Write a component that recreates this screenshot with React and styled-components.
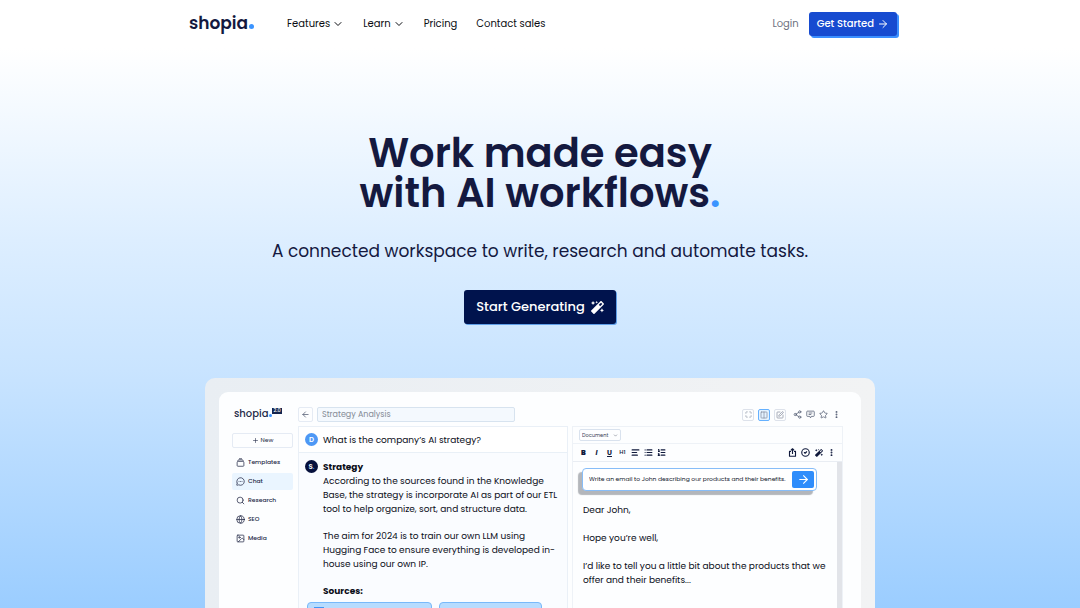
import React from "react";
import styled, { createGlobalStyle } from "styled-components";
import {
  ArrowLeft,
  ArrowRight,
  ChevronDown,
  CircleCheck,
  Columns2,
  EllipsisVertical,
  FileText,
  Globe,
  Image,
  List,
  ListOrdered,
  Maximize,
  MessageCircleMore,
  Plus,
  Search,
  Share2,
  SquarePen,
  Star,
  TextAlignStart,
} from "lucide-react";
import { FaMagic } from "react-icons/fa";

const navLinks = [
  { label: "Features", menu: true },
  { label: "Learn", menu: true },
  { label: "Pricing" },
  { label: "Contact sales" },
];

const LineIcon = ({ d, strokeWidth = 2 }) => (
  <svg
    width="9"
    height="9"
    viewBox="0 0 24 24"
    fill="none"
    stroke="currentColor"
    strokeWidth={strokeWidth}
    strokeLinejoin="round"
  >
    <path d={d} />
  </svg>
);

const TemplatesIcon = () => (
  <LineIcon d="M8 2h8M5 9V7a2 2 0 0 1 2-2h10a2 2 0 0 1 2 2v2M3 12a3 3 0 0 1 3-3h12a3 3 0 0 1 3 3v8a2 2 0 0 1-2 2H5a2 2 0 0 1-2-2z" />
);
const CommentIcon = () => (
  <LineIcon d="M4 3h16a2 2 0 0 1 2 2v10a2 2 0 0 1-2 2h-6l-2 4-2-4H4a2 2 0 0 1-2-2V5a2 2 0 0 1 2-2zM7 8h10M7 12h7" />
);
const ExportIcon = () => (
  <LineIcon strokeWidth={3} d="M8 9H4v13h16V9h-4M12 16V3M8 6l4-4 4 4" />
);

const sideLinks = [
  { label: "Templates", icon: TemplatesIcon },
  { label: "Chat", icon: MessageCircleMore, active: true },
  { label: "Research", icon: Search },
  { label: "SEO", icon: Globe },
  { label: "Media", icon: Image },
];

const App = () => {
  return (
    <>
      <GlobalStyle />
      <Page>
        <Header>
          <Logo href="#">
            shopia
            <Dot $size={5} />
          </Logo>
          <Nav>
            {navLinks.map(({ label, menu }) => (
              <a href="#" key={label}>
                {label}
                {menu && <ChevronDown size={12} />}
              </a>
            ))}
          </Nav>
          <Login href="#">Login</Login>
          <GetStarted>
            Get Started <ArrowRight size={12} />
          </GetStarted>
        </Header>
        <Hero>
          <h1>
            Work made easy
            <br />
            with AI workflows<i>.</i>
          </h1>
          <p>A connected workspace to write, research and automate tasks.</p>
          <Generate>
            Start Generating <FaMagic size={13} />
          </Generate>
        </Hero>
        <Frame>
          <Workspace>
            <Sidebar>
              <AppLogo>
                shopia
                <Dot $size={3} />
                <sup>2.0</sup>
              </AppLogo>
              <NewButton>
                <Plus size={7} /> New
              </NewButton>
              <SideNav>
                {sideLinks.map(({ label, icon: Icon, active }) => (
                  <SideLink href="#" key={label} $active={active}>
                    <Icon size={9} />
                    {label}
                  </SideLink>
                ))}
              </SideNav>
            </Sidebar>
            <Main>
              <TopBar>
                <BackButton aria-label="Back">
                  <ArrowLeft size={9} />
                </BackButton>
                <TitleInput aria-label="Title" defaultValue="Strategy Analysis" />
                <Views>
                  <ViewButton aria-label="Full screen">
                    <Maximize size={7} />
                  </ViewButton>
                  <ViewButton aria-label="Split view" $active>
                    <Columns2 size={8} />
                  </ViewButton>
                  <ViewButton aria-label="Edit">
                    <SquarePen size={8} />
                  </ViewButton>
                </Views>
                <Actions>
                  <IconButton aria-label="Share">
                    <Share2 size={9} />
                  </IconButton>
                  <IconButton aria-label="Comments">
                    <CommentIcon />
                  </IconButton>
                  <IconButton aria-label="Favourite">
                    <Star size={9} />
                  </IconButton>
                  <IconButton aria-label="More">
                    <EllipsisVertical size={9} strokeWidth={3} />
                  </IconButton>
                </Actions>
              </TopBar>
              <Panels>
                <Chat>
                  <Question>
                    <Avatar>D</Avatar>
                    What is the company’s AI strategy?
                  </Question>
                  <Answer>
                    <Avatar $dark>
                      S<i>.</i>
                    </Avatar>
                    <div>
                      <h2>Strategy</h2>
                      <p>
                        According to the sources found in the Knowledge
                        <br />
                        Base, the strategy is incorporate AI as part of our ETL
                        <br />
                        tool to help organize, sort, and structure data.
                      </p>
                      <p>
                        The aim for 2024 is to train our own LLM using
                        <br />
                        Hugging Face to ensure everything is developed in-
                        <br />
                        house using our own IP.
                      </p>
                      <h2>Sources:</h2>
                    </div>
                  </Answer>
                  <Sources>
                    <Source aria-label="Web source">
                      <b />
                    </Source>
                    <Source aria-label="File source" $small>
                      <FileText size={9} />
                    </Source>
                  </Sources>
                </Chat>
                <Editor>
                  <DocumentBar>
                    <SelectBox>
                      <select aria-label="Type">
                        <option>Document</option>
                      </select>
                      <ChevronDown size={5} />
                    </SelectBox>
                  </DocumentBar>
                  <Toolbar>
                    <button aria-label="Bold">
                      <b>B</b>
                    </button>
                    <button aria-label="Italic">
                      <em>I</em>
                    </button>
                    <button aria-label="Underline">
                      <u>U</u>
                    </button>
                    <button aria-label="Heading">
                      <small>H1</small>
                    </button>
                    <button aria-label="Align">
                      <TextAlignStart size={9} strokeWidth={3} />
                    </button>
                    <button aria-label="Bullets">
                      <List size={9} strokeWidth={3} />
                    </button>
                    <button aria-label="Numbers">
                      <ListOrdered size={9} strokeWidth={3} />
                    </button>
                    <Spacer />
                    <button aria-label="Export">
                      <ExportIcon />
                    </button>
                    <button aria-label="Check">
                      <CircleCheck size={9} strokeWidth={3} />
                    </button>
                    <button aria-label="Generate">
                      <FaMagic size={8} />
                    </button>
                    <button aria-label="More">
                      <EllipsisVertical size={9} strokeWidth={3} />
                    </button>
                  </Toolbar>
                  <Sheet>
                    <Prompt>
                      <input
                        aria-label="Prompt"
                        defaultValue="Write an email to John describing our products and their benefits."
                      />
                      <button aria-label="Send">
                        <ArrowRight size={13} strokeWidth={2} />
                      </button>
                    </Prompt>
                    <Letter>
                      <p>Dear John,</p>
                      <p>Hope you’re well,</p>
                      <p>
                        I’d like to tell you a little bit about the products that we
                        <br />
                        offer and their benefits...
                      </p>
                    </Letter>
                  </Sheet>
                </Editor>
              </Panels>
            </Main>
          </Workspace>
        </Frame>
      </Page>
    </>
  );
};

const GlobalStyle = createGlobalStyle`
  * {
    box-sizing: border-box;
  }
  body {
    margin: 0;
    color: #14193f;
    font-family: Poppins, Inter, sans-serif;
  }
  h1, h2, p {
    margin: 0;
  }
  i {
    color: #3b94ff;
    font-style: normal;
  }
  a {
    color: inherit;
    text-decoration: none;
  }
  button, input, select {
    margin: 0;
    padding: 0;
    border: 0;
    background: none;
    color: inherit;
    font: inherit;
  }
  svg {
    flex-shrink: 0;
  }
`;

const Page = styled.div`
  height: 100vh;
  overflow: hidden;
  background: linear-gradient(#fff 48px, #ddeeff 240px, #c9e4ff 370px, #9bcdff 100%);
`;

const Header = styled.header`
  display: flex;
  align-items: center;
  max-width: 714px;
  height: 48px;
  margin: 0 auto;
  padding-left: 6px;
`;

const Dot = styled.span`
  display: inline-block;
  width: ${({ $size }) => $size}px;
  height: ${({ $size }) => $size}px;
  margin-left: 1px;
  border-radius: 50%;
  background: #3b94ff;
`;

const Logo = styled.a`
  width: 98px;
  padding-bottom: 3px;
  font-size: 17px;
  font-weight: 600;
`;

const Nav = styled.nav`
  display: flex;
  flex: 1;
  gap: 19px;
  color: #0b0d12;
  font-size: 10px;
  a {
    display: flex;
    align-items: center;
    gap: 2px;
  }
`;

const Login = styled.a`
  margin-right: 10px;
  color: #6d7180;
  font-size: 10px;
`;

const GetStarted = styled.button`
  display: flex;
  align-items: center;
  gap: 3px;
  height: 24px;
  padding: 0 8px;
  border-radius: 3px;
  background: #174bd0;
  box-shadow: 2px 2px 0 #3b8fff;
  color: #fff;
  font-size: 10px;
  font-weight: 500;
`;

const Hero = styled.section`
  padding-top: 85px;
  text-align: center;
  h1 {
    font-size: 40px;
    font-weight: 600;
    line-height: 40px;
  }
  p {
    margin-top: 25px;
    font-size: 17px;
    line-height: 26px;
  }
`;

const Generate = styled.button`
  display: inline-flex;
  align-items: center;
  gap: 6px;
  height: 34px;
  margin-top: 26px;
  padding: 0 12px;
  border-radius: 3px;
  background: #00134d;
  box-shadow: 1px 1px 0 #5f9fe8;
  color: #fff;
  font-size: 13px;
  font-weight: 500;
`;

const Frame = styled.section`
  max-width: 670px;
  margin: 54px auto 0;
  padding: 14px 14px 0;
  border-radius: 10px 10px 0 0;
  background: linear-gradient(90deg, #e9eef3, #f2f3f4);
`;

const Workspace = styled.div`
  display: flex;
  min-height: 260px;
  padding: 14px 18px 0 13px;
  border-radius: 9px 9px 0 0;
  background: #fdfeff;
`;

const Sidebar = styled.aside`
  width: 61px;
  margin-right: 5px;
  color: #252b48;
`;

const AppLogo = styled.div`
  display: flex;
  align-items: baseline;
  height: 27px;
  padding-left: 2px;
  font-size: 10px;
  font-weight: 500;
  line-height: 15px;
  sup {
    align-self: flex-start;
    height: 6px;
    margin-top: 2px;
    padding: 0 1px;
    background: #14254f;
    color: #fff;
    font-size: 5px;
    line-height: 6px;
  }
`;

const NewButton = styled.button`
  display: flex;
  align-items: center;
  justify-content: center;
  gap: 2px;
  width: 100%;
  height: 15px;
  border: 1px solid #e5ebf4;
  border-radius: 2px;
  font-size: 6px;
`;

const SideNav = styled.nav`
  display: grid;
  gap: 2px;
  margin-top: 6px;
`;

const SideLink = styled.a`
  display: flex;
  align-items: center;
  gap: 3px;
  height: 17px;
  padding-left: 4px;
  border-radius: 2px;
  background: ${({ $active }) => ($active ? "#eaf5ff" : "transparent")};
  font-size: 6px;
  font-weight: 500;
`;

const Main = styled.div`
  flex: 1;
  min-width: 0;
`;

const TopBar = styled.div`
  display: flex;
  gap: 4px;
  height: 20px;
  padding: 1px 2px 4px 0;
  color: #525b72;
`;

const BackButton = styled.button`
  display: grid;
  place-items: center;
  width: 15px;
  border: 1px solid #e5ebf4;
  border-radius: 2px;
`;

const TitleInput = styled.input`
  width: 198px;
  padding: 0 4px;
  border: 1px solid #d7e3ef;
  border-radius: 2px;
  background: #f4f9fe;
  color: #858b96;
  font-size: 8px;
`;

const Actions = styled.div`
  display: flex;
  align-items: center;
  gap: 4px;
`;

const Views = styled(Actions)`
  margin: 0 3px 0 auto;
`;

const IconButton = styled.button`
  display: grid;
  place-items: center;
  width: 9px;
  height: 12px;
`;

const ViewButton = styled(IconButton)`
  width: 12px;
  border: 1px solid ${({ $active }) => ($active ? "#65b1ff" : "#dde2eb")};
  border-radius: 2px;
  background: ${({ $active }) => ($active ? "#e4f2ff" : "transparent")};
  color: #7e8698;
`;

const Panels = styled.div`
  display: flex;
  gap: 4px;
  height: 190px;
`;

const Chat = styled.section`
  flex: 1;
  border: 1px solid #eaf0f7;
  border-bottom: 0;
  background: #fafcff;
  color: #0a0d18;
  font-size: 9px;
  line-height: 14px;
`;

const Question = styled.div`
  display: flex;
  align-items: center;
  gap: 5px;
  height: 26px;
  padding-left: 6px;
  border-bottom: 1px solid #e9f0f7;
  background: #fff;
`;

const Avatar = styled.span`
  flex-shrink: 0;
  width: 13px;
  height: 13px;
  border-radius: 50%;
  background: ${({ $dark }) => ($dark ? "#06103c" : "#4e98f5")};
  color: #fff;
  font-size: 7px;
  font-weight: 600;
  line-height: 13px;
  text-align: center;
`;

const Answer = styled.div`
  display: flex;
  gap: 5px;
  padding: 7px 0 0 6px;
  white-space: nowrap;
  h2 {
    font-size: 9px;
    font-weight: 700;
    line-height: 14px;
  }
  p {
    margin-bottom: 13px;
  }
`;

const Sources = styled.div`
  display: flex;
  gap: 7px;
  padding: 4px 8px;
`;

const Source = styled.button`
  width: ${({ $small }) => ($small ? 103 : 125)}px;
  height: 20px;
  padding: 4px 6px;
  border: 1px solid #78b9fa;
  border-radius: 4px;
  background: #b7dcff;
  text-align: left;
  b {
    display: block;
    width: 10px;
    height: 10px;
    background: #4096f5;
  }
`;

const Editor = styled.section`
  display: flex;
  flex-direction: column;
  width: 271px;
  border: 1px solid #eef2f7;
  border-bottom: 0;
`;

const DocumentBar = styled.div`
  height: 17px;
  padding: 2px 6px;
  border-bottom: 1px solid #eef2f7;
`;

const SelectBox = styled.div`
  display: flex;
  align-items: center;
  width: 42px;
  height: 12px;
  padding: 0 2px;
  border: 1px solid #d9e2ee;
  border-radius: 2px;
  color: #3b4256;
  select {
    flex: 1;
    min-width: 0;
    appearance: none;
    font-size: 5px;
  }
`;

const Toolbar = styled.div`
  display: flex;
  align-items: center;
  gap: 4px;
  height: 18px;
  padding: 0 6px;
  border-bottom: 1px solid #e9edf3;
  color: #101a3c;
  font-size: 7px;
  font-weight: 700;
  button {
    display: grid;
    place-items: center;
    width: 9px;
    height: 12px;
  }
  small {
    font-size: 6px;
    font-weight: 500;
  }
`;

const Spacer = styled.span`
  flex: 1;
`;

const Sheet = styled.div`
  flex: 1;
  padding: 6px 20px 0 9px;
  border-right: 5px solid #e2e4e9;
`;

const Prompt = styled.div`
  display: flex;
  align-items: center;
  height: 23px;
  padding: 0 2px 0 6px;
  border: 1px solid #87bdf8;
  border-radius: 4px;
  background: #fff;
  box-shadow: -4px 4px 1px #b3b6bb;
  input {
    flex: 1;
    min-width: 0;
    color: #11162b;
    font-size: 6px;
  }
  button {
    display: grid;
    place-items: center;
    width: 22px;
    height: 17px;
    border-radius: 2px;
    background: #2f8dfb;
    color: #fff;
  }
`;

const Letter = styled.div`
  padding: 12px 0 0 1px;
  color: #0a0d18;
  font-size: 9px;
  line-height: 14px;
  white-space: nowrap;
  p {
    margin-bottom: 14px;
  }
`;

export default App;
